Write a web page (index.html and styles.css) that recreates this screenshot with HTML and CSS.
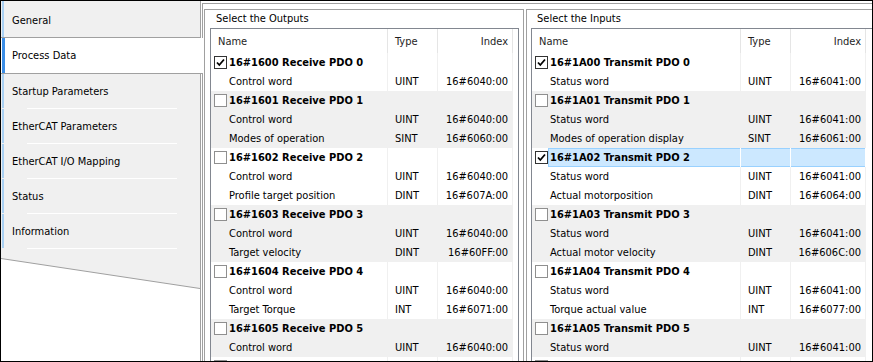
FILE: index.html
```html
<!DOCTYPE html>
<html lang="en">
<head>
    <meta charset="UTF-8">
    <title>Process Data</title>
    <link rel="stylesheet" href="styles.css">
</head>
<body>
<div class="window">

    <!-- Editor tabs -->
    <div class="sidebar">
        <div class="tab first">General</div>
        <div class="tab active">Process Data</div>
        <div class="tab">Startup Parameters</div>
        <div class="tab">EtherCAT Parameters</div>
        <div class="tab">EtherCAT I/O Mapping</div>
        <div class="tab">Status</div>
        <div class="tab">Information</div>
        <svg class="tab-foot" width="199" height="41" viewBox="0 0 199 41">
            <polygon points="0,0 199,0 199,39.5 0,9.5" fill="#f0f0f0"/>
            <line x1="0" y1="9.5" x2="199" y2="39.5" stroke="#a0a0a0" stroke-width="1"/>
        </svg>
    </div>

    <div class="content">

        <!-- Outputs -->
        <div class="group outputs">
            <div class="group-title">Select the Outputs</div>
            <div class="list">
                <table>
                    <colgroup>
                        <col class="col-name">
                        <col class="col-type">
                        <col class="col-index">
                    </colgroup>
                    <thead>
                        <tr><th>Name</th><th>Type</th><th class="idx">Index</th></tr>
                    </thead>
                    <tbody>
                        <tr class="pdo"><td class="name"><span class="check on"><svg width="11" height="11" viewBox="0 0 11 11"><path d="M2 5.5 L4.3 8 L9 2.5" fill="none" stroke="#000" stroke-width="1.8"/></svg></span><b>16#1600 Receive PDO 0</b></td><td></td><td></td></tr>
                        <tr><td class="name">Control word</td><td>UINT</td><td class="idx">16#6040:00</td></tr>

                        <tr class="pdo alt"><td class="name"><span class="check"></span><b>16#1601 Receive PDO 1</b></td><td></td><td></td></tr>
                        <tr class="alt"><td class="name">Control word</td><td>UINT</td><td class="idx">16#6040:00</td></tr>
                        <tr class="alt"><td class="name">Modes of operation</td><td>SINT</td><td class="idx">16#6060:00</td></tr>

                        <tr class="pdo"><td class="name"><span class="check"></span><b>16#1602 Receive PDO 2</b></td><td></td><td></td></tr>
                        <tr><td class="name">Control word</td><td>UINT</td><td class="idx">16#6040:00</td></tr>
                        <tr><td class="name">Profile target position</td><td>DINT</td><td class="idx">16#607A:00</td></tr>

                        <tr class="pdo alt"><td class="name"><span class="check"></span><b>16#1603 Receive PDO 3</b></td><td></td><td></td></tr>
                        <tr class="alt"><td class="name">Control word</td><td>UINT</td><td class="idx">16#6040:00</td></tr>
                        <tr class="alt"><td class="name">Target velocity</td><td>DINT</td><td class="idx">16#60FF:00</td></tr>

                        <tr class="pdo"><td class="name"><span class="check"></span><b>16#1604 Receive PDO 4</b></td><td></td><td></td></tr>
                        <tr><td class="name">Control word</td><td>UINT</td><td class="idx">16#6040:00</td></tr>
                        <tr><td class="name">Target Torque</td><td>INT</td><td class="idx">16#6071:00</td></tr>

                        <tr class="pdo alt"><td class="name"><span class="check"></span><b>16#1605 Receive PDO 5</b></td><td></td><td></td></tr>
                        <tr class="alt"><td class="name">Control word</td><td>UINT</td><td class="idx">16#6040:00</td></tr>

                        <!-- next group, only its checkbox top shows -->
                        <tr class="pdo"><td class="name"><span class="check"></span></td><td></td><td></td></tr>
                    </tbody>
                </table>
            </div>
        </div>

        <!-- Inputs -->
        <div class="group inputs">
            <div class="group-title">Select the Inputs</div>
            <div class="list">
                <table>
                    <colgroup>
                        <col class="col-name wide">
                        <col class="col-type">
                        <col class="col-index">
                    </colgroup>
                    <thead>
                        <tr><th>Name</th><th>Type</th><th class="idx">Index</th></tr>
                    </thead>
                    <tbody>
                        <tr class="pdo"><td class="name"><span class="check on"><svg width="11" height="11" viewBox="0 0 11 11"><path d="M2 5.5 L4.3 8 L9 2.5" fill="none" stroke="#000" stroke-width="1.8"/></svg></span><b>16#1A00 Transmit PDO 0</b></td><td></td><td></td></tr>
                        <tr><td class="name">Status word</td><td>UINT</td><td class="idx">16#6041:00</td></tr>

                        <tr class="pdo alt"><td class="name"><span class="check"></span><b>16#1A01 Transmit PDO 1</b></td><td></td><td></td></tr>
                        <tr class="alt"><td class="name">Status word</td><td>UINT</td><td class="idx">16#6041:00</td></tr>
                        <tr class="alt"><td class="name">Modes of operation display</td><td>SINT</td><td class="idx">16#6061:00</td></tr>

                        <tr class="pdo selected"><td class="name"><span class="check on"><svg width="11" height="11" viewBox="0 0 11 11"><path d="M2 5.5 L4.3 8 L9 2.5" fill="none" stroke="#000" stroke-width="1.8"/></svg></span><b>16#1A02 Transmit PDO 2</b></td><td></td><td></td></tr>
                        <tr><td class="name">Status word</td><td>UINT</td><td class="idx">16#6041:00</td></tr>
                        <tr><td class="name">Actual motorposition</td><td>DINT</td><td class="idx">16#6064:00</td></tr>

                        <tr class="pdo alt"><td class="name"><span class="check"></span><b>16#1A03 Transmit PDO 3</b></td><td></td><td></td></tr>
                        <tr class="alt"><td class="name">Status word</td><td>UINT</td><td class="idx">16#6041:00</td></tr>
                        <tr class="alt"><td class="name">Actual motor velocity</td><td>DINT</td><td class="idx">16#606C:00</td></tr>

                        <tr class="pdo"><td class="name"><span class="check"></span><b>16#1A04 Transmit PDO 4</b></td><td></td><td></td></tr>
                        <tr><td class="name">Status word</td><td>UINT</td><td class="idx">16#6041:00</td></tr>
                        <tr><td class="name">Torque actual value</td><td>INT</td><td class="idx">16#6077:00</td></tr>

                        <tr class="pdo alt"><td class="name"><span class="check"></span><b>16#1A05 Transmit PDO 5</b></td><td></td><td></td></tr>
                        <tr class="alt"><td class="name">Status word</td><td>UINT</td><td class="idx">16#6041:00</td></tr>

                        <tr class="pdo"><td class="name"><span class="check"></span></td><td></td><td></td></tr>
                    </tbody>
                </table>
            </div>
        </div>

    </div>
</div>
</body>
</html>
```

FILE: styles.css
```css
body {
    margin: 0;
    background: #fff;
    font-family: "DejaVu Sans Condensed", "Liberation Sans", sans-serif;
    font-size: 11px;
    color: #000;
}
.window {
    width: 873px;
    height: 362px;
    box-sizing: border-box;
    border: 1px solid #000;
    display: flex;
    overflow: hidden;
    background: #fff;
}

/* tabs on the left */
.sidebar {
    flex: 0 0 200px;
    box-sizing: border-box;
    display: flex;
    flex-direction: column;
    border-right: 1px solid #a0a0a0;
    z-index: 1;
}
.tab {
    height: 35px;
    box-sizing: border-box;
    display: flex;
    align-items: center;
    padding-left: 11px;
    background:
        linear-gradient(#fff, #fff) 26px 100% / 150px 1px no-repeat,
        linear-gradient(#a8d0f3, #a8d0f3) 1px 0 / 2px 34px no-repeat,
        #f0f0f0;
}
.tab.first {
    height: 37px;
    padding-top: 2px;
    border-bottom: 1px solid #a0a0a0;
    background:
        linear-gradient(#a8d0f3, #a8d0f3) 1px 0 / 2px 100% no-repeat,
        #f0f0f0;
}
.tab.active {
    height: 36px;
    margin-right: -3px;
    border-bottom: 1px solid #a0a0a0;
    background:
        linear-gradient(#3c8ee6, #3c8ee6) 1px 0 / 3px 100% no-repeat,
        #fff;
}
.tab-foot {
    display: block;
}

/* right side */
.content {
    flex: 1;
    min-width: 0;
    margin: 2px 0 0 1px;
    padding: 5px 0 0 1px;
    border-top: 1px solid #a0a0a0;
    border-left: 1px solid #a0a0a0;
    display: flex;
    gap: 2px;
    overflow: hidden;
}
.group {
    flex-shrink: 0;
    box-sizing: border-box;
    display: flex;
    flex-direction: column;
    border: 1px solid #a0a0a0;
    border-bottom: none;
}
.group.outputs {
    width: 320px;
    padding: 0 4px 0 5px;
}
.group.inputs {
    width: 380px;
    padding: 0 0 0 4px;
}
.group-title {
    height: 18px;
    line-height: 18px;
    padding-left: 6px;
}
.list {
    flex: 1;
    border: 1px solid #828790;
    border-bottom: none;
    overflow: hidden;
}
table {
    border-collapse: separate;
    border-spacing: 0;
    table-layout: fixed;
}
.outputs table {
    width: 302px;
}
.inputs table {
    width: 334px;
}
.col-name {
    width: 177px;
}
.col-name.wide {
    width: 209px;
}
.col-type {
    width: 50px;
}
.col-index {
    width: 75px;
}
th {
    height: 24px;
    padding: 0 7px;
    font-weight: normal;
    text-align: left;
    color: #1e1e1e;
    border-right: 1px solid #e5e5e5;
}
td {
    height: 19px;
    padding: 0 0 0 7px;
    white-space: nowrap;
    overflow: hidden;
    border-right: 1px solid #f0f0f0;
}
th.idx,
td.idx {
    text-align: right;
    padding: 0 4px 0 0;
}
td.name {
    padding-left: 18px;
}
tr.pdo td.name {
    padding-left: 3px;
}
tr.alt td {
    background: #f0f0f0;
}
tr.selected td {
    background: #cce8ff;
    border-right-color: #fff;
    box-shadow: inset 0 1px #99d1ff, inset 0 -1px #99d1ff;
}
tr.selected td.name {
    box-shadow: none;
    background:
        linear-gradient(#99d1ff, #99d1ff) 16px 0 / 100% 1px no-repeat,
        linear-gradient(#99d1ff, #99d1ff) 16px 100% / 100% 1px no-repeat,
        linear-gradient(#99d1ff, #99d1ff) 16px 0 / 1px 100% no-repeat,
        linear-gradient(#cce8ff, #cce8ff) 16px 0 / 100% 100% no-repeat,
        #fff;
}
tr.selected td.idx {
    border-right-color: #99d1ff;
}
.check {
    display: inline-block;
    width: 13px;
    height: 13px;
    box-sizing: border-box;
    margin-right: 2px;
    vertical-align: -3px;
    border: 1px solid #8f8f8f;
    background: #fff;
}
.check.on {
    border-color: #333;
}
.check svg {
    display: block;
}
```
